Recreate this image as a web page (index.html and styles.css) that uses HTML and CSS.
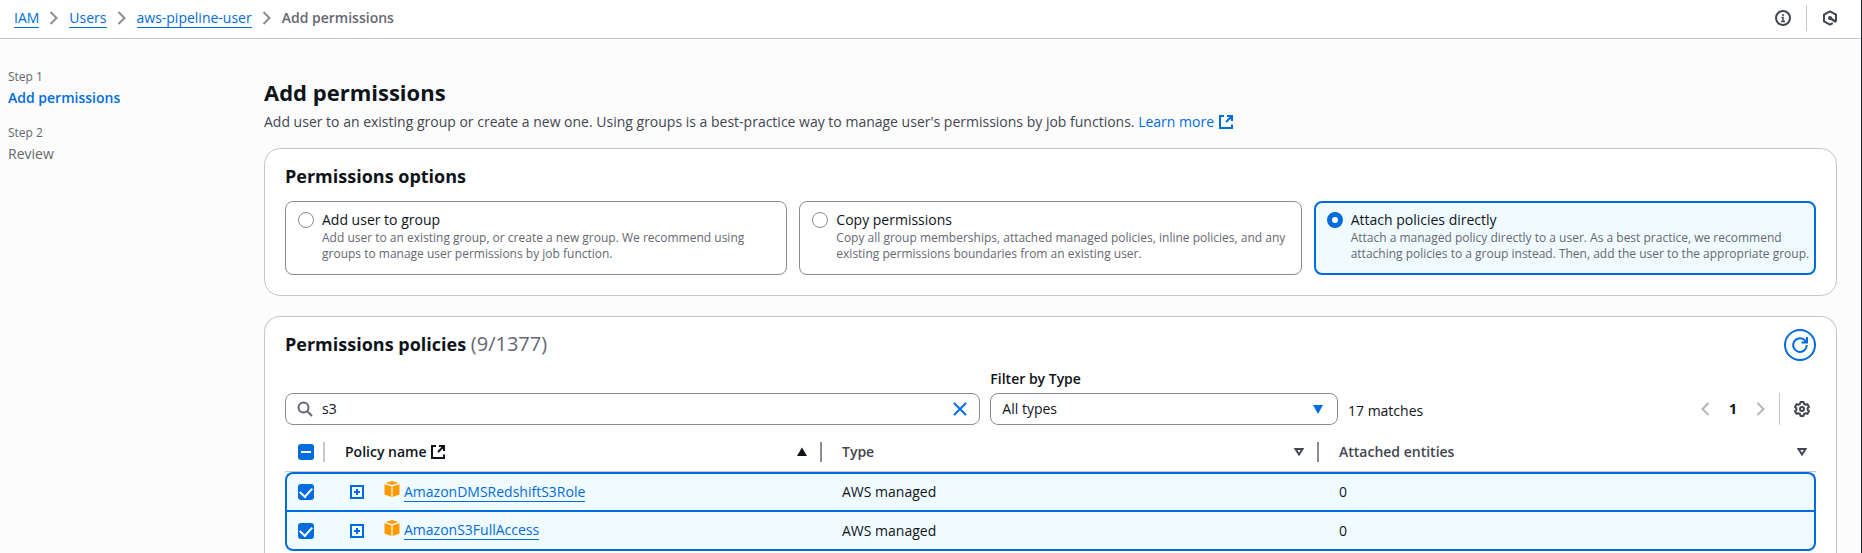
FILE: index.html
```
<!DOCTYPE html>
<html lang="en">
<head>
<meta charset="utf-8">
<title>Add permissions | IAM</title>
<link rel="stylesheet" href="styles.css">
</head>
<body>
<svg class="sprite" aria-hidden="true">
  <symbol id="chevron" viewBox="0 0 16 16"><path d="M4.5 2 10.5 8 4.5 14" fill="none" stroke="currentColor" stroke-width="2"/></symbol>
  <symbol id="external" viewBox="0 0 16 16"><path d="M6 2H2v12h12v-3.500M9 2h5v5M14 2 8 8" fill="none" stroke="currentColor" stroke-width="2"/></symbol>
  <symbol id="sort" viewBox="0 0 16 16"><path d="M4.500 5h7L8 10.500z" fill="none" stroke="currentColor" stroke-width="2"/></symbol>
  <symbol id="expand" viewBox="0 0 16 16"><path d="M2 2h12v12H2zM8 5v6M5 8h6" fill="none" stroke="currentColor" stroke-width="2"/></symbol>
  <symbol id="cube" viewBox="0 0 16 16"><path d="M8 0l6.500 2L8 4 1.500 2zM.5 3.300 7.400 5.200V16L.5 13.500zM15.500 3.300 8.600 5.200V16l6.900-2.500z" fill="#ff9900"/></symbol>
</svg>
<header class="topbar">
  <nav class="breadcrumbs" aria-label="Breadcrumbs">
    <a href="#">IAM</a><svg class="icon"><use href="#chevron"/></svg>
    <a href="#">Users</a><svg class="icon"><use href="#chevron"/></svg>
    <a href="#">aws-pipeline-user</a><svg class="icon"><use href="#chevron"/></svg>
    <span>Add permissions</span>
  </nav>
  <div class="tools">
    <button type="button" class="icon-button" aria-label="Info"><svg class="icon" viewBox="0 0 16 16"><circle cx="8" cy="8" r="7" fill="none" stroke="currentColor" stroke-width="2"/><path d="M8 4v2M6.500 7.500H8V11M6 11.500h4" fill="none" stroke="currentColor" stroke-width="1.500"/></svg></button>
    <span class="rule"></span>
    <button type="button" class="icon-button" aria-label="Assistant"><svg class="icon" viewBox="0 0 16 16"><path d="M14 11.500V4.700L8 1.300 2 4.700v6.600L8 14.700l2.800-1.500" fill="none" stroke="currentColor" stroke-width="2"/><path d="M8 8l6 4" fill="none" stroke="currentColor" stroke-width="2.500"/><circle cx="8" cy="8" r="2" fill="currentColor"/></svg></button>
  </div>
</header>
<div class="page">
  <nav class="steps" aria-label="Steps">
    <div class="step current"><small>Step 1</small><span>Add permissions</span></div>
    <div class="step"><small>Step 2</small><span>Review</span></div>
  </nav>
  <main class="content">
    <div class="intro">
      <h1>Add permissions</h1>
      <p>Add user to an existing group or create a new one. Using groups is a best-practice way to manage user's permissions by job functions. <a href="#">Learn more <svg class="icon"><use href="#external"/></svg></a></p>
    </div>
    <section class="card">
      <h2>Permissions options</h2>
      <div class="tiles">
        <label class="tile"><input type="radio" name="option"><span class="tile-text"><span>Add user to group</span><small>Add user to an existing group, or create a new group. We recommend using groups to manage user permissions by job function.</small></span></label>
        <label class="tile"><input type="radio" name="option"><span class="tile-text"><span>Copy permissions</span><small>Copy all group memberships, attached managed policies, inline policies, and any existing permissions boundaries from an existing user.</small></span></label>
        <label class="tile"><input type="radio" name="option" checked><span class="tile-text"><span>Attach policies directly</span><small>Attach a managed policy directly to a user. As a best practice, we recommend attaching policies to a group instead. Then, add the user to the appropriate group.</small></span></label>
      </div>
    </section>
    <section class="card policies">
      <div class="card-head">
        <h2>Permissions policies <span class="count">(9/1377)</span></h2>
        <button type="button" class="refresh" aria-label="Refresh"><svg class="icon" viewBox="0 0 16 16"><path d="M14.800 8A6.800 6.800 0 1 1 12.500 3L14.500 5M15 0v5.500H9.500" fill="none" stroke="currentColor" stroke-width="2"/></svg></button>
      </div>
      <div class="filters">
        <div class="search">
          <svg class="icon" viewBox="0 0 16 16"><circle cx="6.500" cy="6.500" r="5" fill="none" stroke="currentColor" stroke-width="2"/><path d="M10 10l5 5" stroke="currentColor" stroke-width="2"/></svg>
          <input type="text" value="s3" aria-label="Search policies">
          <button type="button" class="icon-button" aria-label="Clear"><svg class="icon" viewBox="0 0 16 16"><path d="M2 2l12 12M14 2 2 14" stroke="currentColor" stroke-width="2"/></svg></button>
        </div>
        <div class="field">
          <label for="type">Filter by Type</label>
          <div class="select"><select id="type"><option>All types</option></select><svg class="icon" viewBox="0 0 16 16"><path d="M3 4h10l-5 9z" fill="currentColor"/></svg></div>
        </div>
        <div class="results">
          <span class="matches">17 matches</span>
          <div class="pager">
            <button type="button" class="icon-button" aria-label="Previous page" disabled><svg class="icon flip"><use href="#chevron"/></svg></button>
            <b>1</b>
            <button type="button" class="icon-button" aria-label="Next page" disabled><svg class="icon"><use href="#chevron"/></svg></button>
            <span class="rule"></span>
            <button type="button" class="icon-button" aria-label="Preferences"><svg class="icon" viewBox="0 0 16 16"><path d="M6.500 1h3l.5 2 1.300.7 2-.6L15 5.700 13.600 7.200v1.600L15 10.300l-1.700 2.600-2-.6-1.300.7-.5 2h-3L6 13l-1.300-.7-2 .6L1 10.300l1.400-1.500V7.200L1 5.700l1.700-2.600 2 .6L6 3z" fill="none" stroke="currentColor" stroke-width="2" stroke-linejoin="round"/><circle cx="8" cy="8" r="2" fill="none" stroke="currentColor" stroke-width="2"/></svg></button>
          </div>
        </div>
      </div>
      <table class="table">
        <colgroup><col class="col-check"><col><col><col></colgroup>
        <thead>
          <tr>
            <th scope="col"><input type="checkbox" class="mixed" aria-label="Select all"></th>
            <th scope="col" class="sorted"><div class="th">Policy name <svg class="icon"><use href="#external"/></svg><svg class="icon end" viewBox="0 0 16 16"><path d="M8 3.500 13 12H3z" fill="currentColor"/></svg></div></th>
            <th scope="col"><div class="th">Type<svg class="icon end"><use href="#sort"/></svg></div></th>
            <th scope="col"><div class="th">Attached entities<svg class="icon end"><use href="#sort"/></svg></div></th>
          </tr>
        </thead>
        <tbody>
          <tr>
            <td><input type="checkbox" checked aria-label="Select AmazonDMSRedshiftS3Role"></td>
            <td><div class="policy"><button type="button" class="icon-button" aria-label="Expand"><svg class="icon"><use href="#expand"/></svg></button><svg class="icon cube"><use href="#cube"/></svg><a href="#">AmazonDMSRedshiftS3Role</a></div></td>
            <td>AWS managed</td>
            <td>0</td>
          </tr>
          <tr>
            <td><input type="checkbox" checked aria-label="Select AmazonS3FullAccess"></td>
            <td><div class="policy"><button type="button" class="icon-button" aria-label="Expand"><svg class="icon"><use href="#expand"/></svg></button><svg class="icon cube"><use href="#cube"/></svg><a href="#">AmazonS3FullAccess</a></div></td>
            <td>AWS managed</td>
            <td>0</td>
          </tr>
        </tbody>
      </table>
    </section>
  </main>
</div>
</body>
</html>
```
FILE: styles.css
```
* { box-sizing: border-box; }
body {
  margin: 0;
  min-height: 100vh;
  display: flex;
  flex-direction: column;
  background: #fcfcfd;
  border-right: 1px solid #232b37;
  color: #0f141a;
  font: 14px/20px "Open Sans", "Noto Sans", sans-serif;
}
h1, h2, p { margin: 0; }
a { color: #006ce0; text-decoration: none; }
small { font-size: 12px; line-height: 16px; }
input, select, button { font: inherit; color: inherit; margin: 0; }
.sprite { display: none; }
.icon { width: 16px; height: 16px; flex: none; display: block; }
.flip { transform: scaleX(-1); }
.icon-button { padding: 0; border: 0; background: none; color: #424650; display: block; }
.rule { width: 1px; align-self: stretch; background: #c6c6cd; }

.topbar {
  display: flex;
  justify-content: space-between;
  align-items: center;
  height: 39px;
  padding: 0 23px 2px 14px;
  background: #fff;
  border-bottom: 1px solid #c6c6cd;
}
.breadcrumbs { display: flex; align-items: center; gap: 7px; color: #656871; font-weight: 600; }
.breadcrumbs a { font-weight: 400; line-height: 18px; border-bottom: 1px solid #006ce0; }
.breadcrumbs .icon { color: #8c8c94; }
.tools { display: flex; align-items: center; gap: 15px; height: 26px; }

.page { flex: 1; display: flex; }
.steps { width: 264px; flex: none; padding: 29px 8px; color: #656871; display: flex; flex-direction: column; gap: 16px; }
.step { display: flex; flex-direction: column; gap: 2px; }
.step small { line-height: 18px; }
.current span { color: #006ce0; font-weight: 600; }

.content { flex: 1; min-width: 0; padding: 38px 24px 0 0; display: flex; flex-direction: column; gap: 20px; }
.intro h1 { font-size: 22px; line-height: 30px; font-weight: 700; }
.intro p { padding-top: 5px; color: #424650; line-height: 20px; margin-bottom: -4px; }
.intro a { white-space: nowrap; }
.intro .icon { display: inline-block; vertical-align: -3px; }

.card { background: #fff; border: 1px solid #c6c6cd; border-radius: 16px; padding: 15px 20px 20px; }
h2 { font-size: 18px; line-height: 24px; font-weight: 700; }
.tiles { display: grid; grid-template-columns: repeat(3, 1fr); gap: 12px; margin-top: 13px; }
.tile { display: flex; gap: 8px; min-height: 74px; padding: 8px 4px 8px 12px; border: 1px solid #8c8c94; border-radius: 8px; }
.tile:has(:checked) { border: 2px solid #006ce0; background: #f0fbff; padding: 7px 3px 7px 11px; }
.tile-text { display: flex; flex-direction: column; }
.tile small { color: #656871; }
input[type="radio"] { appearance: none; flex: none; width: 16px; height: 16px; margin-top: 2px; border: 1px solid #8c8c94; border-radius: 50%; background: #fff; }
input[type="radio"]:checked { border: 5px solid #006ce0; }

.policies { flex: 1; border-bottom: 0; border-radius: 16px 16px 0 0; padding-top: 12px; padding-bottom: 0; }
.card-head { display: flex; justify-content: space-between; align-items: center; }
.card-head h2 { padding-bottom: 2px; }
.count { color: #656871; font-size: 20px; font-weight: 400; }
.refresh { width: 32px; height: 32px; padding: 0; display: grid; place-items: center; border: 2px solid #006ce0; border-radius: 50%; background: #fff; color: #006ce0; }
.filters { display: grid; grid-template-columns: minmax(0, 2fr) minmax(0, 1fr) 468px; align-items: end; gap: 10px; margin-top: 8px; }
.search { display: flex; align-items: center; gap: 9px; height: 32px; padding: 0 11px; border: 1px solid #8c8c94; border-radius: 8px; color: #656871; }
.search input { flex: 1; min-width: 0; padding: 0; border: 0; outline: 0; background: none; color: #0f141a; }
.search .icon-button { color: #006ce0; }
.field { display: flex; flex-direction: column; gap: 4px; }
.field label { font-weight: 600; }
.select { display: grid; align-items: center; }
.select > * { grid-area: 1 / 1; }
.select select { appearance: none; width: 100%; height: 32px; padding: 0 36px 0 11px; border: 1px solid #8c8c94; border-radius: 8px; background: #fff; }
.select .icon { justify-self: end; margin-right: 12px; color: #006ce0; pointer-events: none; }
.results { display: flex; justify-content: space-between; align-items: flex-end; }
.matches { padding-bottom: 4px; }
.pager { display: flex; align-items: center; height: 32px; gap: 14px; padding-right: 6px; }
.pager b { width: 12px; text-align: center; }
.pager .rule { margin-left: -4px; }
.pager :disabled { color: #b4b4bb; }

.table { width: 100%; table-layout: fixed; border-collapse: separate; border-spacing: 0; margin-top: 8px; }
.col-check { width: 40px; }
th, td { padding: 0 12px 0 20px; text-align: left; }
th:first-child, td:first-child { padding: 0 0 0 13px; }
th { height: 39px; padding-bottom: 1px; font-weight: 600; color: #424650; border-bottom: 1px solid #c6c6cd; background: linear-gradient(#8c8c94, #8c8c94) no-repeat right center / 2px 20px; }
th:first-child { background-image: linear-gradient(#c6c6cd, #c6c6cd); }
th:last-child { background: none; padding-right: 1px; }
th:last-child .end { margin-right: 5px; }
.sorted { color: #0f141a; }
.th { display: flex; align-items: center; gap: 4px; }
.end { margin-left: auto; }
td { height: 38px; border-top: 2px solid #006ce0; background: #f0fbff; }
td:first-child { border-left: 2px solid #006ce0; padding-left: 11px; }
td:last-child { border-right: 2px solid #006ce0; }
tbody tr:first-child td:first-child { border-top-left-radius: 8px; }
tbody tr:first-child td:last-child { border-top-right-radius: 8px; }
tbody tr:last-child td { height: 41px; border-bottom: 2px solid #006ce0; }
tbody tr:last-child td:first-child { border-bottom-left-radius: 8px; }
tbody tr:last-child td:last-child { border-bottom-right-radius: 8px; }
.policy { display: flex; align-items: center; padding-left: 4px; }
.policy .icon-button { color: #006ce0; }
.cube { margin: 0 4px 6px 19px; }
.policy a { line-height: 18px; border-bottom: 1px solid #006ce0; }
input[type="checkbox"] { appearance: none; display: grid; place-items: center; width: 16px; height: 16px; border-radius: 3px; background: #006ce0; }
input[type="checkbox"]::after { content: ""; width: 6px; height: 10px; border: solid #fff; border-width: 0 2px 2px 0; transform: translateY(-1px) rotate(42deg); }
input.mixed::after { width: 10px; height: 2px; border: 0; background: #fff; transform: none; }
```
